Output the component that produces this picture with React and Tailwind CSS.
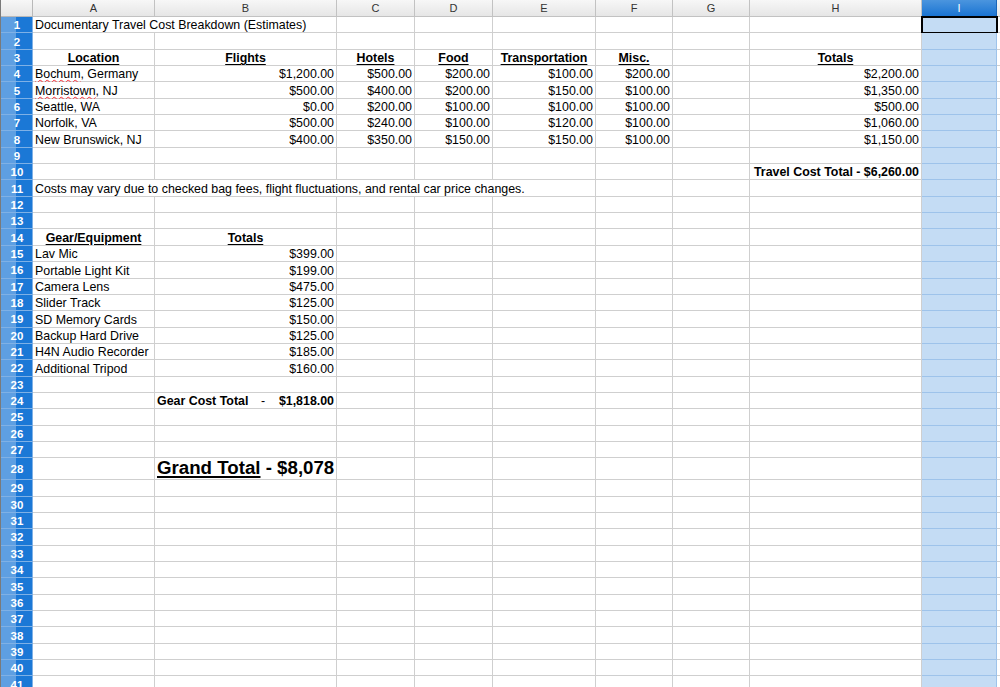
import React from 'react';

// column widths in px (row header first, then A..I, then a cut-off J)
const COLS = ['A', 'B', 'C', 'D', 'E', 'F', 'G', 'H', 'I', 'J'];
const GRID = 'grid grid-cols-[32px_122px_182px_78px_78px_103px_77px_77px_172px_75px_100px]';

const money = (v) => ({ v, align: 'right' });
const head = (v) => ({ v, align: 'center', bold: true, underline: true });

// sheet content: row number -> { col: cell }
const SHEET = {
  1: { A: { v: 'Documentary Travel Cost Breakdown (Estimates)', span: 2 } },
  3: {
    A: head('Location'),
    B: head('Flights'),
    C: head('Hotels'),
    D: head('Food'),
    E: head('Transportation'),
    F: head('Misc.'),
    H: head('Totals'),
  },
  4: { A: { v: 'Bochum', rest: ', Germany', squiggle: true }, B: money('$1,200.00'), C: money('$500.00'), D: money('$200.00'), E: money('$100.00'), F: money('$200.00'), H: money('$2,200.00') },
  5: { A: { v: 'Morristown', rest: ', NJ', squiggle: true }, B: money('$500.00'), C: money('$400.00'), D: money('$200.00'), E: money('$150.00'), F: money('$100.00'), H: money('$1,350.00') },
  6: { A: { v: 'Seattle, WA' }, B: money('$0.00'), C: money('$200.00'), D: money('$100.00'), E: money('$100.00'), F: money('$100.00'), H: money('$500.00') },
  7: { A: { v: 'Norfolk, VA' }, B: money('$500.00'), C: money('$240.00'), D: money('$100.00'), E: money('$120.00'), F: money('$100.00'), H: money('$1,060.00') },
  8: { A: { v: 'New Brunswick, NJ' }, B: money('$400.00'), C: money('$350.00'), D: money('$150.00'), E: money('$150.00'), F: money('$100.00'), H: money('$1,150.00') },
  10: { H: { v: 'Travel Cost Total - $6,260.00', align: 'right', bold: true } },
  11: { A: { v: 'Costs may vary due to checked bag fees, flight fluctuations, and rental car price changes.', span: 5 } },
  14: { A: head('Gear/Equipment'), B: head('Totals') },
  15: { A: { v: 'Lav Mic' }, B: money('$399.00') },
  16: { A: { v: 'Portable Light Kit' }, B: money('$199.00') },
  17: { A: { v: 'Camera Lens' }, B: money('$475.00') },
  18: { A: { v: 'Slider Track' }, B: money('$125.00') },
  19: { A: { v: 'SD Memory Cards' }, B: money('$150.00') },
  20: { A: { v: 'Backup Hard Drive' }, B: money('$125.00') },
  21: { A: { v: 'H4N Audio Recorder' }, B: money('$185.00') },
  22: { A: { v: 'Additional Tripod' }, B: money('$160.00') },
  24: { B: { gear: true } },
  28: { B: { grand: true } },
};

const ROW_COUNT = 41;

const CellText = ({ cell }) => {
  if (cell.gear) {
    return (
      <div className="flex w-full items-center font-bold">
        <span className="w-[100px]">Gear Cost Total</span>
        <span className="w-[12px] font-normal text-center">-</span>
        <span className="flex-1 text-right">$1,818.00</span>
      </div>
    );
  }
  if (cell.grand) {
    return (
      <span className="text-[18.7px] font-bold leading-none">
        <span className="underline decoration-2 underline-offset-2">Grand Total</span> - $8,078
      </span>
    );
  }
  if (cell.squiggle) {
    return (
      <span>
        <span className="underline decoration-wavy decoration-red-500 decoration-1 underline-offset-[1px]">{cell.v}</span>
        {cell.rest}
      </span>
    );
  }
  return (
    <span className={`${cell.bold ? 'font-bold' : ''} ${cell.underline ? 'underline underline-offset-[2px]' : ''}`}>
      {cell.v}
    </span>
  );
};

const Cell = ({ cell, col }) => {
  const isI = col === 'I';
  const base = isI
    ? 'bg-[#c4dcf4] border-r border-b border-[#9ec3ea] min-h-0'
    : 'bg-white border-r border-b border-[#cfcfcf] min-h-0';
  if (!cell) return <div className={base} />;
  const justify = cell.align === 'right' ? 'justify-end' : cell.align === 'center' ? 'justify-center' : 'justify-start';
  const span = cell.span === 2 ? 'col-span-2' : cell.span === 5 ? 'col-span-5' : '';
  return (
    <div className={`${base} ${span} flex ${cell.grand ? 'items-center' : 'items-end'} ${justify} px-[2px] whitespace-nowrap overflow-visible`}>
      <CellText cell={cell} />
    </div>
  );
};

const RowHeader = ({ n }) => (
  <div className="flex items-center justify-center pl-[1px] pt-[1px] min-h-0 bg-[linear-gradient(to_right,#5e9fe2_0%,#5e9fe2_49%,#1b78d6_50%,#1b78d6_100%)] border-r border-b border-[#7fb1e6] text-white font-bold text-[11.5px]">
    {n}
  </div>
);

const SheetRow = ({ n }) => {
  const data = SHEET[n] || {};
  const cells = [];
  let skip = 0;
  COLS.forEach((col) => {
    if (skip > 0) {
      skip -= 1;
      return;
    }
    const cell = data[col];
    if (cell && cell.span) skip = cell.span - 1;
    cells.push(<Cell key={col} col={col} cell={cell} />);
  });
  return (
    <div className={`${GRID} grid-rows-[100%] ${n === 28 ? 'h-[22px]' : 'h-[16.35px]'} relative`}>
      <RowHeader n={n} />
      {cells}
      {n === 1 && (
        <div className="absolute left-[920px] top-[-1px] w-[77px] h-[18px] border-2 border-black" />
      )}
    </div>
  );
};

export default function App() {
  const rows = Array.from({ length: ROW_COUNT }, (_, i) => i + 1);
  return (
    <div className="w-[1000px] h-[687px] overflow-hidden bg-white text-[12.4px] leading-[14px] text-black font-['Liberation_Sans',Arial,sans-serif] border-l border-[#7a7a7a]">
      <div className={`${GRID} h-[17px]`}>
        <div className="bg-[linear-gradient(#f7f7f7,#e6e6e6)] border-r border-b border-[#b9b9b9]" />
        {COLS.map((c) =>
          c === 'I' ? (
            <div key={c} className="flex items-center justify-center bg-[linear-gradient(#4b95de,#1a74d2)] border-r border-b border-[#1a66b8] text-white text-[11px]">
              {c}
            </div>
          ) : (
            <div key={c} className="flex items-center justify-center bg-[linear-gradient(#f7f7f7,#e6e6e6)] border-r border-b border-[#c2c2c2] text-[#333] text-[11px]">
              {c === 'J' ? '' : c}
            </div>
          )
        )}
      </div>
      {rows.map((n) => (
        <SheetRow key={n} n={n} />
      ))}
    </div>
  );
}
